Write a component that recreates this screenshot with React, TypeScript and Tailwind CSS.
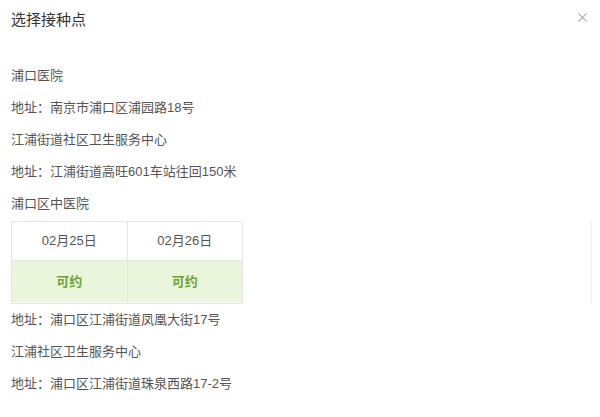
import React from "react";

const font = { fontFamily: '"Liberation Sans", "Noto Sans CJK SC", sans-serif' };

function Line({ children }: { children: React.ReactNode }) {
  return <div className="h-[32px] leading-[32px] text-[13px] text-[#555]">{children}</div>;
}

export default function App() {
  return (
    <div className="relative w-[600px] h-[417px] bg-white overflow-hidden" style={font}>
      <div className="flex items-center justify-between h-[40px] pl-[11px] pr-[13px]">
        <div className="text-[15px] text-[#333]">选择接种点</div>
        <svg width="9" height="9" viewBox="0 0 9 9" className="mb-[6px]">
          <path d="M0.5 0.5 L8.5 8.5 M8.5 0.5 L0.5 8.5" stroke="#b0b4bb" strokeWidth="1.2" />
        </svg>
      </div>
      <div className="pl-[11px] pt-[20px]">
        <Line>浦口医院</Line>
        <Line>地址：南京市浦口区浦园路18号</Line>
        <Line>江浦街道社区卫生服务中心</Line>
        <Line>地址：江浦街道高旺601车站往回150米</Line>
        <Line>浦口区中医院</Line>
        <div className="flex pt-[1px] pr-[8px]">
          <div className="w-[232px] border border-[#e6e6e6] text-[13px]">
            <div className="flex h-[39px] border-b border-[#e6e6e6] text-[#555]">
              <div className="flex-1 flex items-center justify-center border-r border-[#e6e6e6]">02月25日</div>
              <div className="flex-1 flex items-center justify-center">02月26日</div>
            </div>
            <div className="flex h-[41px] bg-[#e9f6dc] text-[#6da52f] font-bold">
              <div className="flex-1 flex items-center justify-center border-r border-[#e6e6e6]">可约</div>
              <div className="flex-1 flex items-center justify-center">可约</div>
            </div>
          </div>
          <div className="flex-1" />
          <div className="w-[1px] h-[83px] bg-[#eeeeee]" />
        </div>
        <Line>地址：浦口区江浦街道凤凰大街17号</Line>
        <Line>江浦社区卫生服务中心</Line>
        <Line>地址：浦口区江浦街道珠泉西路17-2号</Line>
      </div>
    </div>
  );
}
